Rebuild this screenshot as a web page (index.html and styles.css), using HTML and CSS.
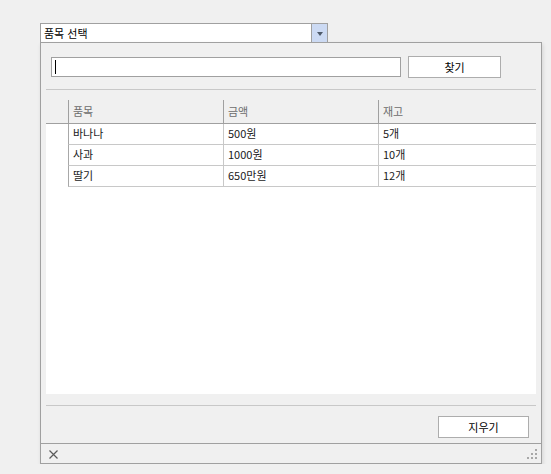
FILE: index.html
```html
<!DOCTYPE html>
<html lang="ko">
<head>
    <meta charset="UTF-8">
    <meta name="viewport" content="width=device-width, initial-scale=1.0">
    <title> 품목 선택 </title>
    <link rel="stylesheet" href="styles.css">
</head>
<body>

    <div class="mainContainer">

        <div class="comboBox">
            <div class="comboText">품목 선택</div>
            <div class="comboButton"><span class="arrow"></span></div>
        </div>

        <div class="dropPanel">

            <div class="searchRow">
                <div class="searchBox"><span class="caret"></span></div>
                <div class="winButton findButton">찾기</div>
            </div>

            <div class="separator topSep"></div>

            <div class="grid">
                <div class="gridHead">
                    <div class="corner"></div>
                    <div class="headCell col1">품목</div>
                    <div class="headCell col2">금액</div>
                    <div class="headCell col3">재고</div>
                </div>
                <div id="gridBody"></div>
            </div>

            <div class="separator bottomSep"></div>

            <div class="bottomRow">
                <div class="winButton clearButton">지우기</div>
            </div>

            <div class="statusBar">
                <svg class="closeIcon" width="9" height="9" viewBox="0 0 9 9">
                    <path d="M0.5 0.5 L8.5 8.5 M8.5 0.5 L0.5 8.5" stroke="#5a5a5a" stroke-width="1.2" fill="none"/>
                </svg>
                <svg class="grip" width="10" height="10" viewBox="0 0 10 10">
                    <rect x="8" y="0" width="2" height="2" fill="#a8a8a8"/>
                    <rect x="4" y="4" width="2" height="2" fill="#a8a8a8"/>
                    <rect x="8" y="4" width="2" height="2" fill="#a8a8a8"/>
                    <rect x="0" y="8" width="2" height="2" fill="#a8a8a8"/>
                    <rect x="4" y="8" width="2" height="2" fill="#a8a8a8"/>
                    <rect x="8" y="8" width="2" height="2" fill="#a8a8a8"/>
                </svg>
            </div>

        </div>
    </div>

    <script>

        const items = [
            { name: "바나나", price: "500원", stock: "5개" },
            { name: "사과", price: "1000원", stock: "10개" },
            { name: "딸기", price: "650만원", stock: "12개" }
        ]

        function addRow (item) {
            const body = document.getElementById('gridBody');

            let row = document.createElement('div');
            row.className = 'gridRow';

            let gap = document.createElement('div');
            gap.className = 'corner';
            row.append(gap);

            const values = [item.name, item.price, item.stock];
            for ( let i = 0; i < values.length; i++ ) {
                let cell = document.createElement('div');
                cell.className = 'cell col' + (i + 1);
                cell.innerText = values[i];
                row.append(cell);
            }

            body.append(row);
        }

        for ( let i = 0; i < items.length; i++ ) {
            addRow(items[i]);
        }

    </script>
</body>
</html>
```

FILE: styles.css
```css
* {
    margin: 0;
    padding: 0;
    box-sizing: border-box;
}

body {
    background-color: #f0f0f0;
    font-family: "Noto Sans CJK KR", "Noto Sans", sans-serif;
    font-size: 11px;
    color: #1a1a1a;
}

.mainContainer {
    padding: 23px 0 0 40px;
}

.comboBox {
    width: 288px;
    height: 20px;
    border: 1px solid #a0a0a0;
    background-color: white;
    display: flex;
}

.comboText {
    flex: 1;
    line-height: 18px;
    padding-left: 3px;
    color: black;
}

.comboButton {
    width: 16px;
    border-left: 1px solid #a0a0a0;
    background-color: #ccdaf3;
    display: flex;
    align-items: center;
    justify-content: center;
}

.arrow {
    width: 0;
    height: 0;
    border-left: 3.5px solid transparent;
    border-right: 3.5px solid transparent;
    border-top: 4px solid #4e5a6a;
    margin-top: 1px;
}

.dropPanel {
    width: 502px;
    height: 422px;
    margin-top: -1px;
    border: 1px solid #a0a0a0;
    background-color: #f0f0f0;
    box-shadow: 1px 2px 4px rgba(0, 0, 0, 0.12);
}

.searchRow {
    display: flex;
    align-items: center;
    height: 22px;
    margin-top: 13px;
    padding-left: 10px;
    gap: 7px;
}

.searchBox {
    width: 350px;
    height: 20px;
    border: 1px solid #a0a0a0;
    background-color: white;
    padding: 2px 0 0 3px;
}

.caret {
    display: block;
    width: 1px;
    height: 14px;
    background-color: black;
}

.winButton {
    height: 22px;
    border: 1px solid #adadad;
    background-color: white;
    text-align: center;
    line-height: 20px;
    color: black;
}

.findButton {
    width: 93px;
}

.separator {
    width: 490px;
    height: 1px;
    margin-left: 5px;
    background-color: #c8c8c8;
}

.topSep {
    margin-top: 11px;
}

.grid {
    width: 490px;
    height: 294px;
    margin: 10px 0 0 5px;
    background-color: white;
}

.gridHead {
    display: flex;
    height: 24px;
    background-color: #f0f0f0;
    border-bottom: 1px solid #a0a0a0;
}

.corner {
    width: 22px;
    flex-shrink: 0;
}

.headCell {
    border-left: 1px solid #a0a0a0;
    padding-left: 4px;
    line-height: 22px;
    color: #6d6d6d;
}

.col1 {
    width: 155px;
}

.col2 {
    width: 155px;
}

.col3 {
    width: 158px;
}

.gridRow {
    display: flex;
    height: 21px;
}

.cell {
    border-left: 1px solid #c8c8c8;
    border-bottom: 1px solid #c8c8c8;
    padding-left: 4px;
    line-height: 19px;
}

.cell.col1 {
    border-left-color: #a8a8a8;
}

.bottomSep {
    margin-top: 11px;
}

.bottomRow {
    display: flex;
    justify-content: flex-end;
    margin-top: 10px;
    padding-right: 12px;
}

.clearButton {
    width: 91px;
}

.statusBar {
    margin-top: 5px;
    height: 20px;
    border-top: 1px solid #a0a0a0;
    display: flex;
    align-items: center;
    justify-content: space-between;
    padding: 0 4px 0 8px;
}

.closeIcon {
    margin-top: 1px;
}

.grip {
    margin-top: 1px;
}
```
